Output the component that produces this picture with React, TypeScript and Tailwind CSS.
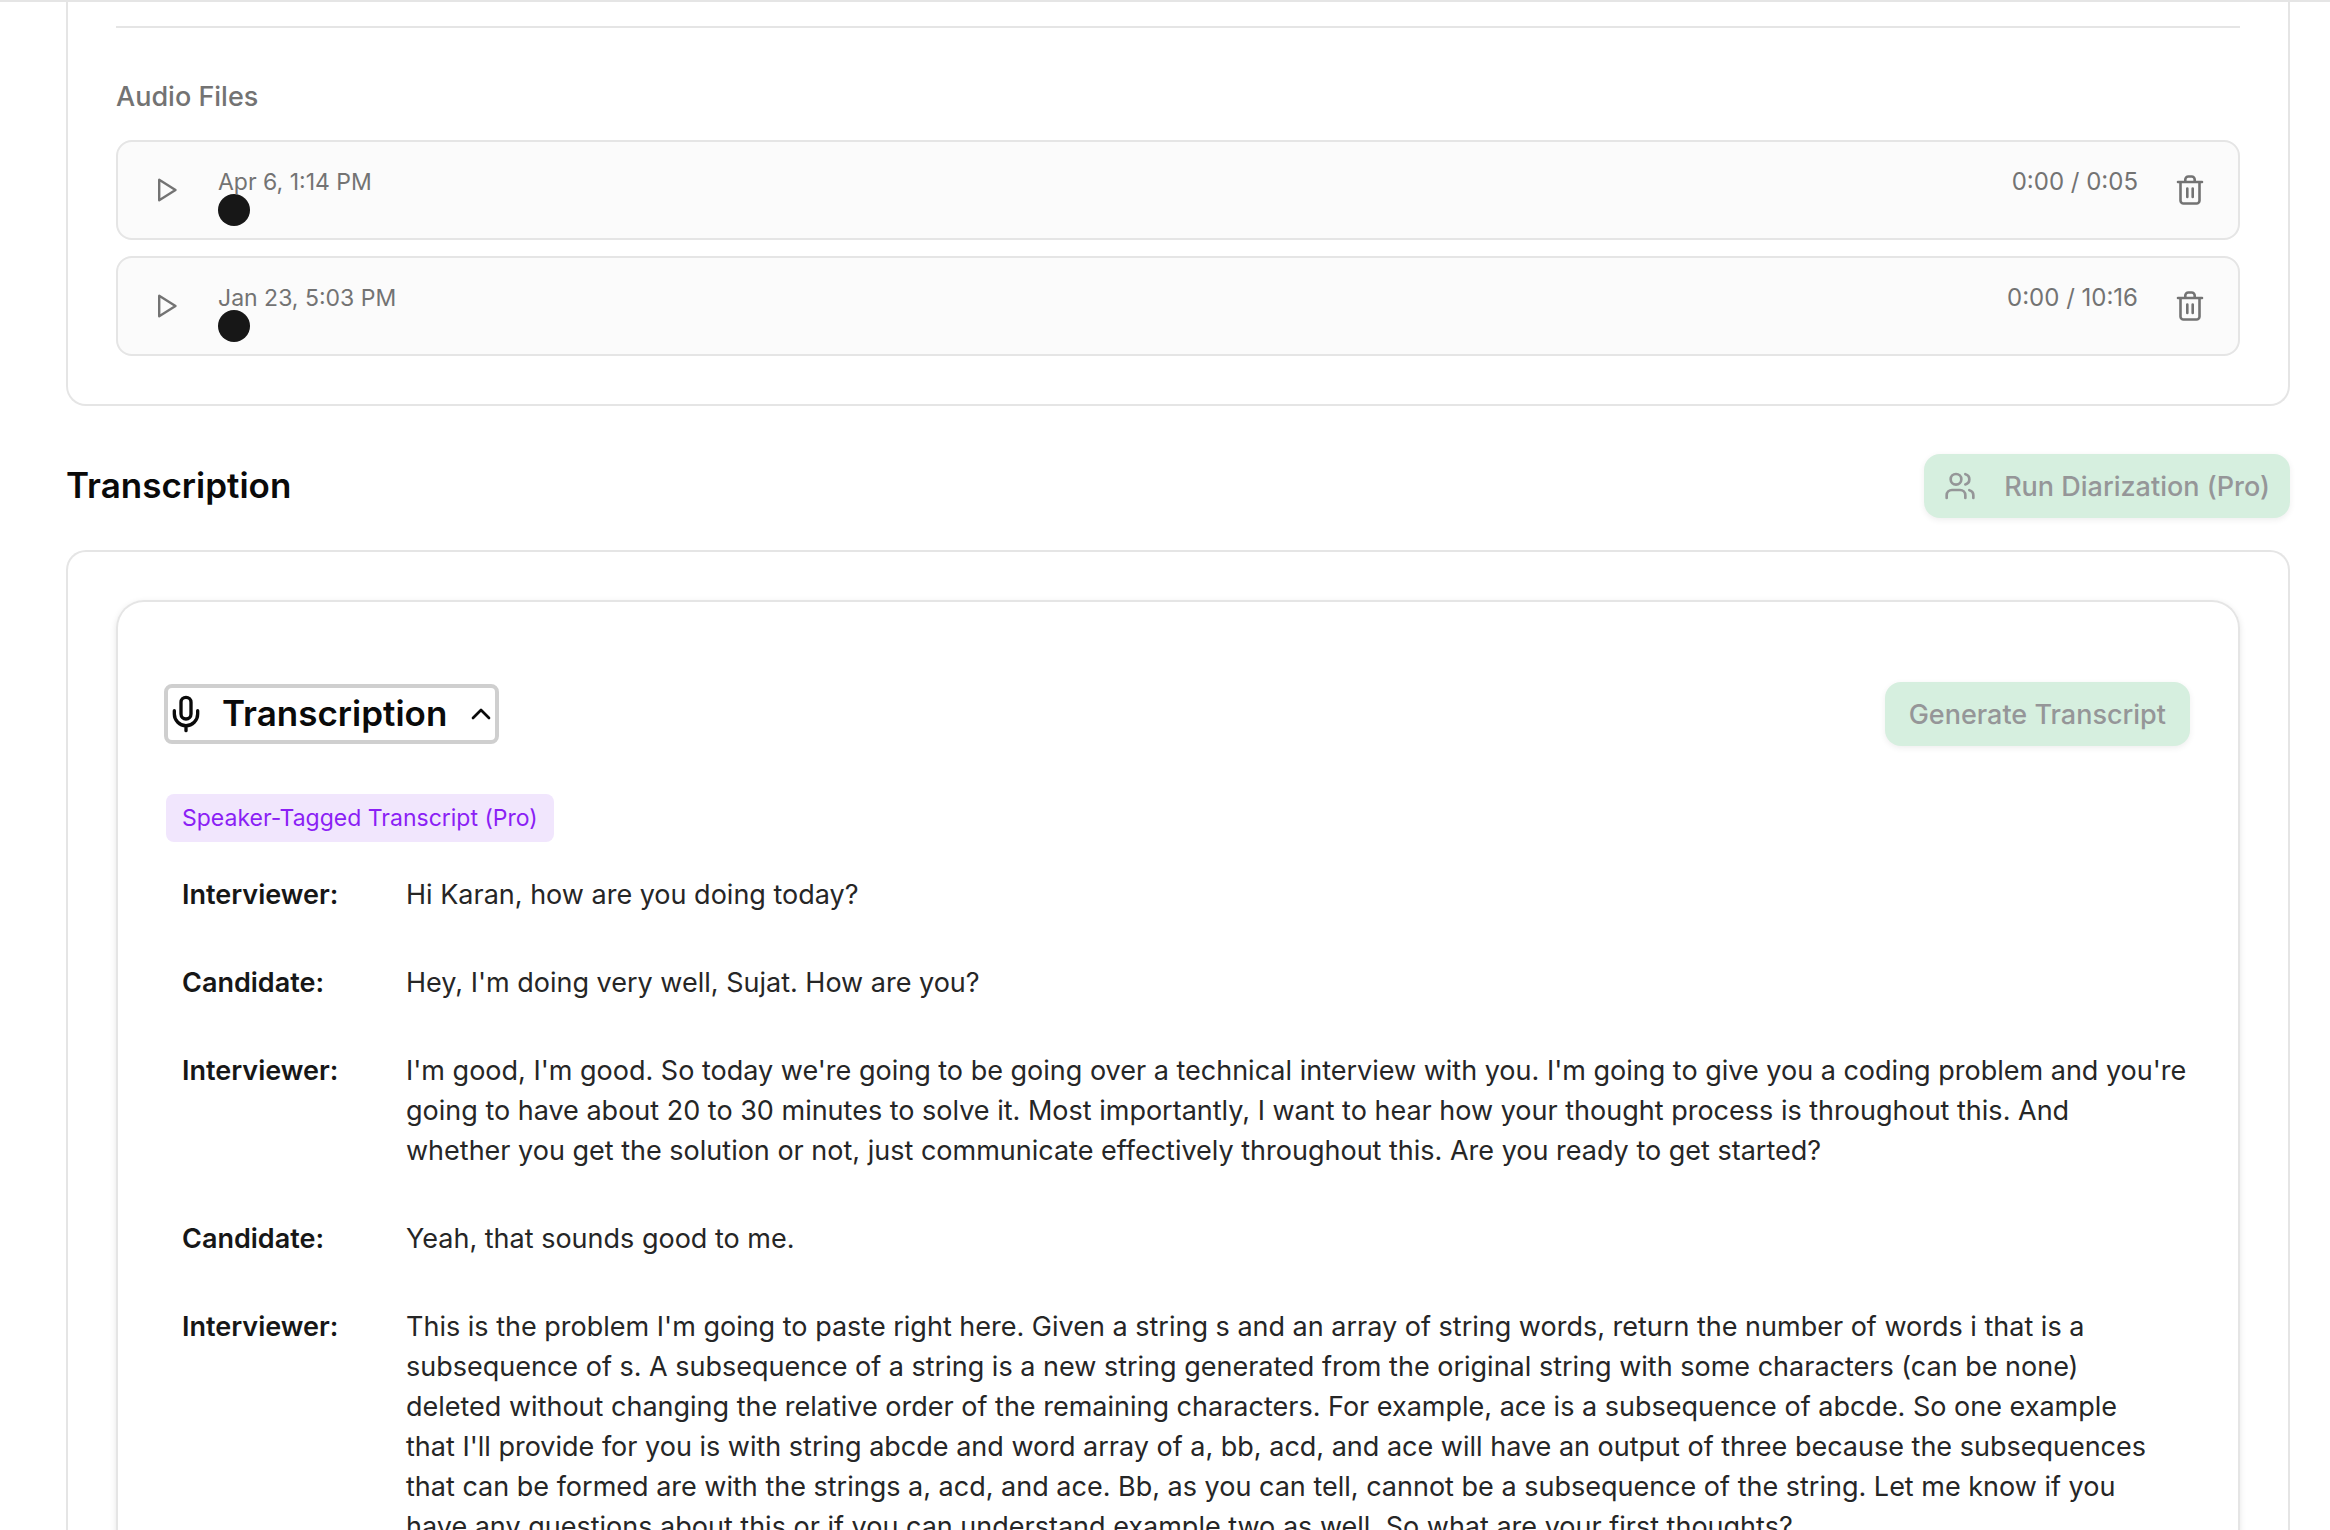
import React, { useState } from 'react';
import { Mic, Users, ChevronUp } from 'lucide-react';

interface AudioFile {
  id: number;
  recordedAt: string;
  position: string;
  duration: string;
}

interface Utterance {
  speaker: 'Interviewer' | 'Candidate';
  text: string;
}

const audioFiles: AudioFile[] = [
  { id: 1, recordedAt: 'Apr 6, 1:14 PM', position: '0:00', duration: '0:05' },
  { id: 2, recordedAt: 'Jan 23, 5:03 PM', position: '0:00', duration: '10:16' },
];

const transcript: Utterance[] = [
  { speaker: 'Interviewer', text: 'Hi Karan, how are you doing today?' },
  { speaker: 'Candidate', text: "Hey, I'm doing very well, Sujat. How are you?" },
  {
    speaker: 'Interviewer',
    text: `I'm good, I'm good. So today we're going to be going over a technical interview with you. I'm going to give you a coding problem and you're
going to have about 20 to 30 minutes to solve it. Most importantly, I want to hear how your thought process is throughout this. And
whether you get the solution or not, just communicate effectively throughout this. Are you ready to get started?`,
  },
  { speaker: 'Candidate', text: 'Yeah, that sounds good to me.' },
  {
    speaker: 'Interviewer',
    text: `This is the problem I'm going to paste right here. Given a string s and an array of string words, return the number of words i that is a
subsequence of s. A subsequence of a string is a new string generated from the original string with some characters (can be none)
deleted without changing the relative order of the remaining characters. For example, ace is a subsequence of abcde. So one example
that I'll provide for you is with string abcde and word array of a, bb, acd, and ace will have an output of three because the subsequences
that can be formed are with the strings a, acd, and ace. Bb, as you can tell, cannot be a subsequence of the string. Let me know if you
have any questions about this or if you can understand example two as well. So what are your first thoughts?`,
  },
];

const PlayIcon = () => (
  <svg viewBox="0 0 32 32" className="size-8" fill="none" stroke="currentColor" strokeWidth="2.4" strokeLinejoin="round" aria-hidden="true">
    <path d="M9.200 5.800v20.400L25.500 16z" />
  </svg>
);

const TrashIcon = () => (
  <svg viewBox="0 0 32 32" className="size-8" fill="none" stroke="currentColor" strokeWidth="2.6" strokeLinecap="round" strokeLinejoin="round" aria-hidden="true">
    <path d="M4 8h24M6.500 8v18.500a3 3 0 0 0 3 3h13a3 3 0 0 0 3-3V8M11.300 8V5.500a3 3 0 0 1 3-3h3.400a3 3 0 0 1 3 3v2.500M13.300 14.500v8.500M18.700 14.500v8.500" />
  </svg>
);

const AudioRow: React.FC<{ file: AudioFile }> = ({ file }) => (
  <li className="flex h-[100px] items-center rounded-2xl border-2 border-[#e5e5e5] bg-[#fbfbfb] px-4 text-[#737373]">
    <button type="button" aria-label="Play" className="flex size-16 items-center justify-center">
      <PlayIcon />
    </button>
    <div className="ml-5 flex-1">
      <div className="flex justify-between leading-6">
        <span className="text-[23px]">{file.recordedAt}</span>
        <span className="text-2xl leading-6">{file.position} / {file.duration}</span>
      </div>
      {/* Progress thumb hangs below the track */}
      <div className="h-4">
        <div className="size-8 rounded-full bg-[#171717]" />
      </div>
    </div>
    <button type="button" aria-label="Delete" className="ml-5 flex size-16 items-center justify-center">
      <TrashIcon />
    </button>
  </li>
);

const App: React.FC = () => {
  const [open, setOpen] = useState(true);

  return (
    <div className="h-screen overflow-hidden border-t-2 border-[#e5e5e5] bg-white pr-10 pl-[66px] font-['Inter','Liberation_Sans',sans-serif] text-[#0a0a0a]">
      {/* Audio files */}
      <section className="rounded-b-[20px] border-2 border-t-0 border-[#e5e5e5] px-12 pt-6 pb-12">
        <div className="border-t-2 border-[#e5e5e5] pt-[49px]">
          <h3 className="text-[27px] leading-10 font-medium text-[#737373]">Audio Files</h3>
          <ul className="mt-[23px] space-y-4">
            {audioFiles.map((file) => (
              <AudioRow key={file.id} file={file} />
            ))}
          </ul>
        </div>
      </section>

      {/* Section header */}
      <div className="mt-12 flex items-center justify-between">
        <h2 className="pb-0.5 text-[35px] leading-[56px] font-semibold">Transcription</h2>
        <button type="button" disabled className="flex h-16 items-center rounded-2xl bg-[#d6efdf] px-5 text-[27px] font-medium text-[#959698] shadow-[0_2px_6px_rgba(0,0,0,0.07)]">
          <Users size={32} strokeWidth={2} className="mr-7" />
          <span className="pt-0.5">Run Diarization (Pro)</span>
        </button>
      </div>

      <section className="mt-8 rounded-t-[20px] border-2 border-b-0 border-[#e5e5e5] px-12 pt-12">
        <div className="rounded-t-[28px] border-2 border-b-0 border-[#e5e5e5] px-12 pt-20 shadow-[0_2px_6px_rgba(0,0,0,0.1)]">
          <div className="flex items-center justify-between">
            <button
              type="button"
              aria-expanded={open}
              onClick={() => setOpen(!open)}
              className="flex h-14 items-center rounded-md text-[35px] font-semibold outline-4 -outline-offset-2 outline-[#cfcfcf]"
            >
              <Mic size={40} strokeWidth={2} />
              <span className="ml-4 pb-0.5">Transcription</span>
              <ChevronUp size={32} strokeWidth={2} className="ml-[18px]" />
            </button>
            <button type="button" disabled className="h-16 rounded-2xl bg-[#d6efdf] px-6 pt-0.5 text-[27px] font-medium text-[#959698] shadow-[0_2px_6px_rgba(0,0,0,0.07)]">
              Generate Transcript
            </button>
          </div>

          {open && (
            <div className="mt-12">
              <span className="inline-block rounded-lg bg-[#f1e6fd] px-4 py-2 text-[23px] leading-8 text-[#8b1ff5]">
                Speaker-Tagged Transcript (Pro)
              </span>
              <dl className="-mr-4 mt-[33px] space-y-12 pl-4 text-[27px] leading-10">
                {transcript.map((item, index) => (
                  <div key={index} className="flex">
                    <dt className="w-56 shrink-0 font-semibold text-[#171717]">{item.speaker}:</dt>
                    <dd className="flex-1 whitespace-pre-line text-[#262626]">{item.text}</dd>
                  </div>
                ))}
              </dl>
            </div>
          )}
        </div>
      </section>
    </div>
  );
};

export default App;
